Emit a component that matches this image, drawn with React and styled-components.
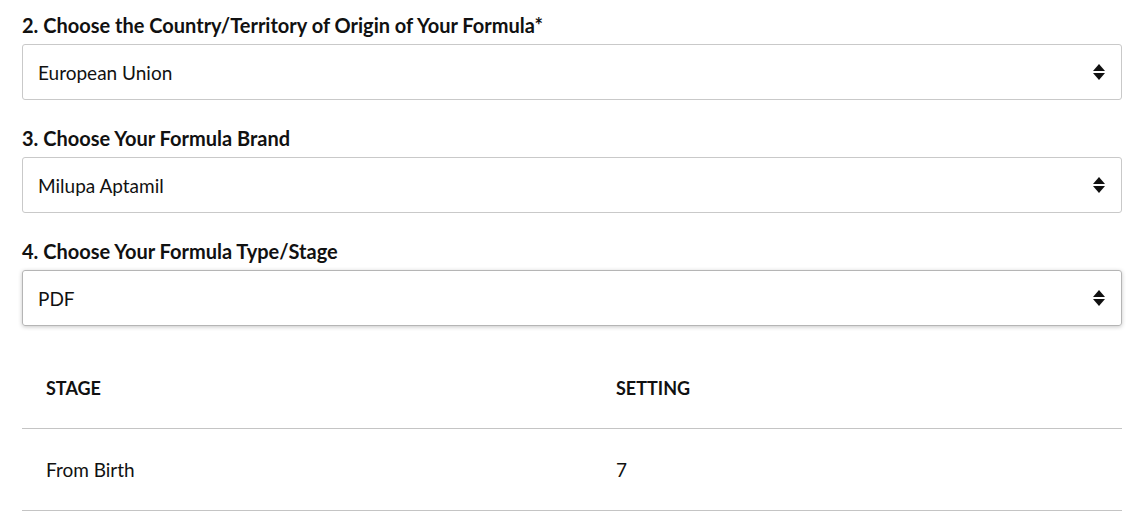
import React from "react";
import styled, { createGlobalStyle } from "styled-components";

const Global = createGlobalStyle`
  html, body { margin: 0; padding: 0; background: #fff; }
  body { font-family: Lato, "Open Sans", sans-serif; color: #111; }
`;

const Page = styled.div`
  padding: 13px 15px 0 22px;
  width: 1100px;
  display: flex;
  flex-direction: column;
`;

const Fields = styled.div`
  display: flex;
  flex-direction: column;
  gap: 26px;
`;

const Field = styled.div`
  display: flex;
  flex-direction: column;
  gap: 7px;
`;

const Label = styled.label`
  font-size: 20px;
  font-weight: 700;
  line-height: 24px;
  color: #111;
`;

const SelectBox = styled.div`
  box-sizing: border-box;
  height: 56px;
  border: 1px solid #c9c9c9;
  border-radius: 3px;
  display: flex;
  align-items: center;
  justify-content: space-between;
  padding: 0 15px 0 15px;
  font-size: 19px;
  color: #111;
  box-shadow: ${(p) => (p.$focused ? "0 1px 4px rgba(0,0,0,0.22)" : "none")};
  border-color: ${(p) => (p.$focused ? "#b5b5b5" : "#c9c9c9")};
`;

const Arrows = () => (
  <svg width="14" height="20" viewBox="0 0 14 20">
    <path d="M7 2 L13 9 L1 9 Z" fill="#111" />
    <path d="M1 11 L13 11 L7 18 Z" fill="#111" />
  </svg>
);

const Table = styled.div`
  margin-top: 21px;
  display: flex;
  flex-direction: column;
`;

const Row = styled.div`
  display: grid;
  grid-template-columns: 570px 1fr;
  align-items: center;
  height: 81px;
  border-bottom: 1px solid #c4c4c4;
  padding-left: 24px;
`;

const HeadCell = styled.div`
  font-size: 18px;
  font-weight: 700;
  text-transform: uppercase;
  color: #111;
`;

const Cell = styled.div`
  font-size: 19px;
  color: #111;
`;

const fields = [
  { label: "2. Choose the Country/Territory of Origin of Your Formula*", value: "European Union" },
  { label: "3. Choose Your Formula Brand", value: "Milupa Aptamil" },
  { label: "4. Choose Your Formula Type/Stage", value: "PDF", focused: true },
];

export default function App() {
  return (
    <>
      <Global />
      <Page>
        <Fields>
          {fields.map((f) => (
            <Field key={f.label}>
              <Label>{f.label}</Label>
              <SelectBox $focused={f.focused}>
                <span>{f.value}</span>
                <Arrows />
              </SelectBox>
            </Field>
          ))}
        </Fields>
        <Table>
          <Row>
            <HeadCell>Stage</HeadCell>
            <HeadCell>Setting</HeadCell>
          </Row>
          <Row>
            <Cell>From Birth</Cell>
            <Cell>7</Cell>
          </Row>
        </Table>
      </Page>
    </>
  );
}
